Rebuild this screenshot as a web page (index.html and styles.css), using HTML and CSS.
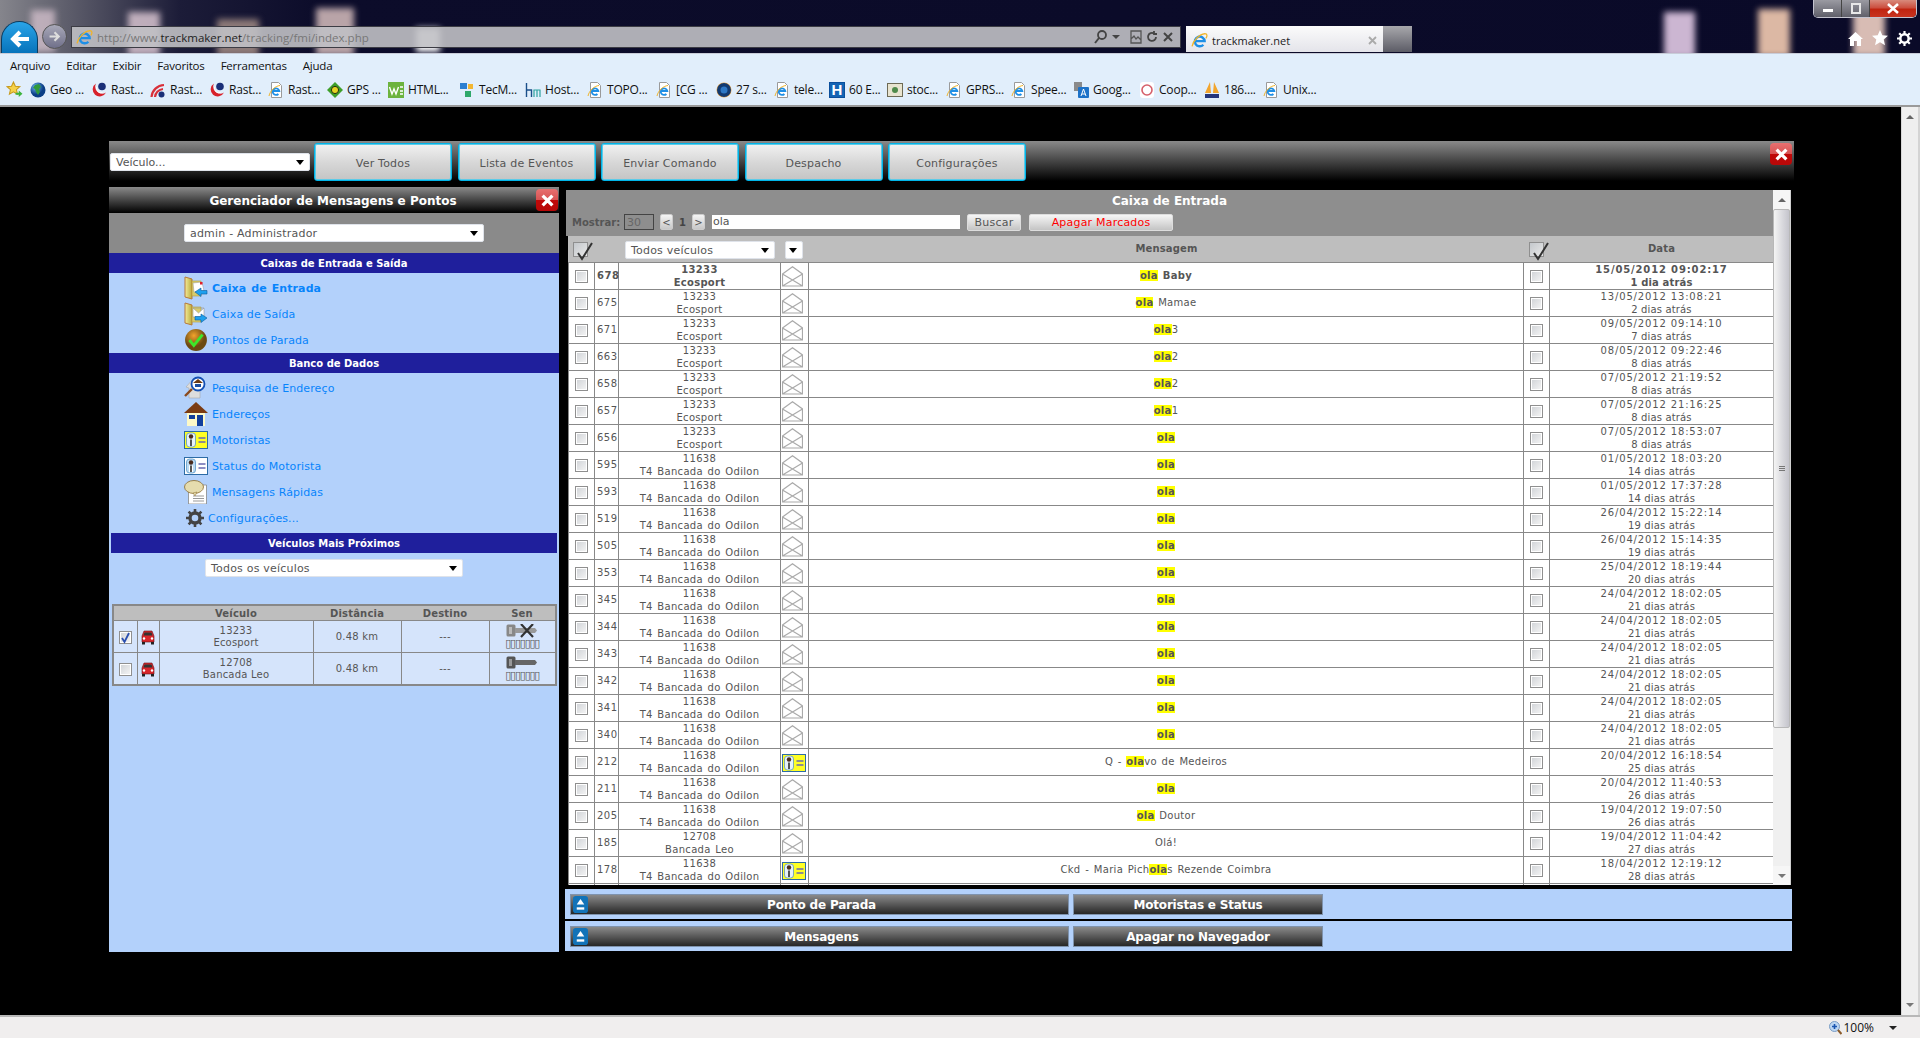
FILE: index.html
```html
<!DOCTYPE html>
<html lang="pt-BR">
<head>
  <meta charset="UTF-8">
  <title>trackmaker.net</title>
  <link rel="stylesheet" href="styles.css">
</head>
<body>
  <!-- icon set -->
  <svg class="defs" width="0" height="0">
    <defs>
      <radialGradient id="globe" cx="35%" cy="30%"><stop offset="0" stop-color="#6fb7f5"/><stop offset="1" stop-color="#0b3f86"/></radialGradient>
      <radialGradient id="ball" cx="40%" cy="30%"><stop offset="0" stop-color="#f3a32c"/><stop offset="1" stop-color="#6b4a12"/></radialGradient>
      <linearGradient id="door" x1="0" x2="1"><stop offset="0" stop-color="#f4ec9c"/><stop offset="1" stop-color="#b9ab3a"/></linearGradient>
    </defs>
    <symbol id="ie" viewBox="0 0 16 16">
      <path d="M4 8.6h8.8A4.6 4.6 0 1 0 11.6 12" fill="none" stroke="#1e8fe6" stroke-width="2.3"/>
      <path d="M1 13.5C2 8 8 2 13 1.500C15.500 1.500 15.500 4 14 6" fill="none" stroke="#f0b429" stroke-width="1.200"/>
    </symbol>
    <symbol id="iedoc" viewBox="0 0 16 16">
      <path d="M3.500 .5h7l3 3v12h-10z" fill="#fff" stroke="#9a9a9a"/>
      <path d="M4.500 9h6.800A3.300 3.300 0 1 0 10.400 12" fill="none" stroke="#1e8fe6" stroke-width="1.800"/>
      <path d="M1 14C2 9 7 4 12 3.500" fill="none" stroke="#f0b429"/>
    </symbol>
    <symbol id="star" viewBox="0 0 16 16">
      <path d="M7 1l1.800 4 4.200.4-3.200 2.800 1 4.200L7 10.200 3.200 12.400l1-4.200L1 5.400l4.200-.4z" fill="#f6d24a" stroke="#c79a1c"/>
      <path d="M9 11h3V9l3.500 3-3.500 3v-2H9z" fill="#3cb43c"/>
    </symbol>
    <symbol id="geo" viewBox="0 0 16 16">
      <circle cx="8" cy="8" r="7.500" fill="url(#globe)"/>
      <path d="M5 3l4-1 2 3-2 2 1 3-2 3-2-3-1-3-2-1z" fill="#2f9a3b"/>
    </symbol>
    <symbol id="rast" viewBox="0 0 16 16">
      <path d="M5 1.500A7 7 0 1 0 15 10.500 7 7 0 0 1 5 1.500z" fill="#d8222c"/>
      <path d="M5.500 5A4.500 4.500 0 0 0 11.500 10.500" fill="none" stroke="#fff"/>
      <circle cx="11" cy="4.500" r="3.800" fill="#1a2f78"/>
    </symbol>
    <symbol id="wave" viewBox="0 0 16 16">
      <path d="M1.500 15A13 13 0 0 1 14 3M5 15A9 9 0 0 1 13 7" fill="none" stroke="#d8303a" stroke-width="2.200"/>
      <circle cx="11.500" cy="12.500" r="3" fill="#1a2f78"/>
    </symbol>
    <symbol id="gps" viewBox="0 0 16 16">
      <path d="M8 0l8 8-8 8-8-8z" fill="#3f9f2a"/>
      <circle cx="8" cy="8" r="3.600" fill="#e6d422" stroke="#23320f"/>
    </symbol>
    <symbol id="html" viewBox="0 0 16 16">
      <rect width="16" height="16" fill="#6cb33e"/>
      <path d="M1.500 5l2.500 7 2-5 2 5 2.500-7M12 5h3M12 9h3M12 12h3" fill="none" stroke="#fff" stroke-width="1.400"/>
    </symbol>
    <symbol id="tecm" viewBox="0 0 16 16">
      <rect x="1" y="1" width="7" height="6" fill="#2d7fd0"/>
      <rect x="9" y="2" width="5" height="5" fill="#f2b632"/>
      <rect x="6" y="9" width="6" height="6" fill="#2fa86a"/>
    </symbol>
    <symbol id="host" viewBox="0 0 16 16">
      <path d="M1.500 1v14M1.500 8h5v7" fill="none" stroke="#1b4f8a" stroke-width="1.400"/>
      <path d="M9 15V8h6v7M12 8v7" fill="none" stroke="#2ea2a0" stroke-width="1.200"/>
    </symbol>
    <symbol id="moon" viewBox="0 0 16 16">
      <circle cx="8" cy="8" r="7.500" fill="#f2a33a"/>
      <circle cx="8" cy="8" r="7" fill="#133a70"/>
      <circle cx="8" cy="8" r="3.500" fill="#2f78c4"/>
    </symbol>
    <symbol id="stoc" viewBox="0 0 16 16">
      <rect x=".5" y="1.500" width="15" height="13" fill="#e8e4d0" stroke="#6d6a55"/>
      <circle cx="8" cy="8" r="3" fill="#4f8a4a"/>
    </symbol>
    <symbol id="goog" viewBox="0 0 16 16">
      <rect x="1" y="0" width="8" height="9" fill="#8a8a8a"/>
      <rect x="5" y="5" width="11" height="11" rx="1" fill="#1d72c8"/>
      <path d="M8 14l2.500-7 2.500 7M9 12h3" fill="none" stroke="#fff"/>
    </symbol>
    <symbol id="coop" viewBox="0 0 16 16">
      <rect x="1" width="14" height="16" rx="3" fill="#fff"/>
      <circle cx="8" cy="8" r="5" fill="none" stroke="#d6606a" stroke-width="1.600"/>
    </symbol>
    <symbol id="pma" viewBox="0 0 16 16">
      <path d="M1 11L6 0l1 11zM9 11l1-11 5 11z" fill="#f2a52d"/>
      <rect x="1" y="12" width="14" height="4" fill="#25357a"/>
    </symbol>
    <symbol id="env" viewBox="0 0 21 21">
      <path d="M.5 8L10.500 .8 20.500 8v12H.5zM.5 8l20 12M20.500 8L.5 20" fill="#fff" stroke="#aaa" stroke-width="1.200"/>
    </symbol>
    <symbol id="driver" viewBox="0 0 24 18">
      <rect x=".5" y=".5" width="23" height="17" fill="#fff" stroke="#2d6ca6"/>
      <rect x="2.500" y="2" width="9" height="14" rx="3" fill="#bcdcf4" stroke="#4b8cc0" stroke-width=".7"/>
      <circle cx="7" cy="5.500" r="2.200" fill="#4a2c1e"/>
      <path d="M5 8.500h4V15H5z" fill="#fff"/>
      <path d="M7 8.500v6.500" stroke="#111" stroke-width="1.400"/>
      <path d="M14.500 7h7M14.500 11h7" stroke="#6a6ab0" stroke-width="1.400"/>
    </symbol>
    <symbol id="driver-y" viewBox="0 0 24 18">
      <rect x=".5" y=".5" width="23" height="17" fill="#ffff24" stroke="#2d6ca6"/>
      <rect x="2.500" y="2" width="9" height="14" rx="3" fill="#e6f2fa" stroke="#4b8cc0" stroke-width=".7"/>
      <circle cx="7" cy="5.500" r="2.200" fill="#4a2c1e"/>
      <path d="M7 8.500v6.500" stroke="#111" stroke-width="1.400"/>
      <path d="M14.500 7h7M14.500 11h7" stroke="#6a6ab0" stroke-width="1.400"/>
    </symbol>
    <symbol id="inbox" viewBox="0 0 24 24">
      <path d="M1 1l7 2v20l-7-2z" fill="url(#door)" stroke="#b5793a"/>
      <path d="M8 5h9v15H8z" fill="#d8cc6c" stroke="#b5a03a" stroke-width=".6"/>
      <path d="M9 7l9-1 2 9-10 1z" fill="#fff" stroke="#999" stroke-width=".5"/>
      <rect x="16" y="6" width="2.500" height="2.500" fill="#e0202c"/>
      <path d="M11 16l6-4v2.500h6v3.500h-6v2.500z" fill="#1ea0ee" stroke="#0a5c9a" stroke-width=".6"/>
    </symbol>
    <symbol id="outbox" viewBox="0 0 24 24">
      <path d="M1 1l7 2v20l-7-2z" fill="url(#door)" stroke="#b5793a"/>
      <path d="M8 5h9v15H8z" fill="#d8cc6c" stroke="#b5a03a" stroke-width=".6"/>
      <path d="M9 6h11v9H9zM9 6l5.500 5L20 6" fill="#fff" stroke="#999" stroke-width=".6"/>
      <path d="M23 16l-6-4v2.500h-6v3.500h6v2.500z" fill="#1ea0ee" stroke="#0a5c9a" stroke-width=".6"/>
    </symbol>
    <symbol id="stop" viewBox="0 0 22 22">
      <circle cx="11" cy="11" r="10" fill="url(#ball)"/>
      <path d="M5 11l4 5 8-10" fill="none" stroke="#3ee62a" stroke-width="2.600"/>
    </symbol>
    <symbol id="search-home" viewBox="0 0 24 24">
      <path d="M2 11l8-9 6 5v15H5V12z" fill="#ddd" stroke="#aaa" stroke-width=".6"/>
      <circle cx="14" cy="8" r="6.500" fill="#fff" stroke="#1450b4" stroke-width="1.800"/>
      <path d="M9 7l5-4 5 4z" fill="#6b3a12"/>
      <rect x="11" y="8" width="6" height="3" fill="#1d4fa0"/>
      <path d="M8 13l-7 7" stroke="#8a4a1e" stroke-width="2.400"/>
    </symbol>
    <symbol id="house" viewBox="0 0 24 24">
      <path d="M0 11L12 0l12 11z" fill="#7a3b13"/>
      <rect x="3" y="11" width="18" height="13" fill="#fdf9c8"/>
      <rect x="5" y="13" width="6" height="4" fill="#123f9c"/>
      <rect x="13" y="13" width="6" height="11" fill="#123f9c"/>
    </symbol>
    <symbol id="bubble" viewBox="0 0 24 24">
      <path d="M4.500 5h18v19h-18z" fill="#fff" stroke="#888" stroke-width=".8"/>
      <path d="M9 16h11M9 18.500h11M9 21h11" stroke="#999"/>
      <ellipse cx="10" cy="7" rx="9.500" ry="6.500" fill="#e5dcae" stroke="#8a6a2a" stroke-width=".8"/>
      <path d="M9 13l2 3 2-4z" fill="#e5dcae" stroke="#8a6a2a" stroke-width=".5"/>
    </symbol>
    <symbol id="gear" viewBox="0 0 18 18">
      <circle cx="9" cy="9" r="5" fill="none" stroke="#444" stroke-width="3.400"/>
      <path d="M9 0v4M9 14v4M0 9h4M14 9h4M2.600 2.600l2.800 2.800M12.600 12.600l2.800 2.800M2.600 15.400l2.800-2.800M12.600 5.400l2.800-2.800" stroke="#444" stroke-width="2.600"/>
    </symbol>
    <symbol id="car-front" viewBox="0 0 16 16">
      <path d="M4 2h8l2 5v6H2V7z" fill="#d8262c" stroke="#6a1014" stroke-width=".6"/>
      <path d="M4.500 3.500h7l1 3h-9z" fill="#333"/>
      <circle cx="4" cy="9.500" r="1.200" fill="#fff"/>
      <circle cx="12" cy="9.500" r="1.200" fill="#fff"/>
      <rect x="2" y="13" width="3" height="2.500" fill="#222"/>
      <rect x="11" y="13" width="3" height="2.500" fill="#222"/>
    </symbol>
    <symbol id="key" viewBox="0 0 32 14">
      <rect x=".5" y=".5" width="9" height="12" rx="1.500" fill="#555"/>
      <rect x="3" y="3" width="3" height="7" fill="#999"/>
      <path d="M9 4h20l2 2.500-2 2.500H9z" fill="#666"/>
    </symbol>
    <symbol id="key-off" viewBox="0 0 32 14">
      <rect x=".5" y=".5" width="9" height="12" rx="1.500" fill="#888"/>
      <rect x="3" y="3" width="3" height="7" fill="#bbb"/>
      <path d="M9 4h20l2 2.500-2 2.500H9z" fill="#999"/>
      <path d="M15 0l12 13M27 0L15 13" stroke="#333" stroke-width="2.200"/>
    </symbol>
    <symbol id="cross" viewBox="0 0 12 12">
      <path d="M1.500 1.500l9 9M10.500 1.500l-9 9" stroke="#fff" stroke-width="3"/>
    </symbol>
    <symbol id="expand" viewBox="0 0 16 18">
      <rect width="16" height="18" rx="3" fill="#1273b8"/>
      <path d="M8 3l4 6H4z" fill="#fff"/>
      <rect x="4" y="12" width="8" height="2.500" fill="#fff"/>
    </symbol>
  </svg>

  <!-- navegador -->
  <header class="browser">
    <div class="chrome">
      <i class="tile tile-1"></i><i class="tile tile-2"></i><i class="tile tile-3"></i><i class="tile tile-4"></i>
      <i class="tile tile-5"></i><i class="tile tile-6"></i><i class="tile tile-7"></i><i class="tile tile-8"></i>
      <div class="back"><svg viewBox="0 0 24 24"><path d="M21 12H6M12 5l-7 7 7 7" fill="none" stroke="#fff" stroke-width="4"/></svg></div>
      <div class="forward"><svg viewBox="0 0 24 24"><path d="M5 12h13M12 6l6 6-6 6" fill="none" stroke="#ddd" stroke-width="3"/></svg></div>
      <div class="address">
        <svg class="ie-16"><use href="#ie"/></svg>
        <span class="url">http://www.<b>trackmaker.net</b>/tracking/fmi/index.php</span>
        <div class="addr-tools">
          <svg width="14" height="16" viewBox="0 0 14 16"><circle cx="8" cy="6" r="4" fill="none" stroke="#444" stroke-width="1.800"/><path d="M5 9l-4 5" stroke="#444" stroke-width="2"/></svg>
          <i class="caret"></i>
          <svg class="tool-gap" width="12" height="14" viewBox="0 0 12 14"><path d="M1 1h10v12H1zM1 9l3-3 2 3 2-2 3 3" fill="none" stroke="#555" stroke-width="1.300"/></svg>
          <svg width="12" height="14" viewBox="0 0 12 14"><path d="M10 7a4 4 0 1 1-2-3.500M8 1v3h3" fill="none" stroke="#444" stroke-width="1.800"/></svg>
          <svg width="12" height="14" viewBox="0 0 12 14"><path d="M2 3l8 8M10 3l-8 8" stroke="#444" stroke-width="2"/></svg>
        </div>
      </div>
      <div class="tab">
        <svg class="ie-16"><use href="#ie"/></svg>
        <span>trackmaker.net</span>
        <svg class="tab-close" width="9" height="9" viewBox="0 0 9 9"><path d="M1 1l7 7M8 1L1 8" stroke="#aaa" stroke-width="1.800"/></svg>
      </div>
      <div class="newtab"></div>
      <div class="chrome-tools">
        <svg width="15" height="15" viewBox="0 0 15 15"><path d="M0 8l7.500-7L15 8h-2v7H9v-5H6v5H2V8z" fill="#fff"/></svg>
        <svg width="16" height="16" viewBox="0 0 16 16"><path d="M8 0l2.300 5.300 5.700.5-4.300 3.800 1.300 5.700L8 12.300l-5 3 1.300-5.700L0 5.800l5.700-.5z" fill="#fff"/></svg>
        <svg width="15" height="15" viewBox="0 0 18 18"><circle cx="9" cy="9" r="5" fill="none" stroke="#fff" stroke-width="3"/><path d="M9 0v4M9 14v4M0 9h4M14 9h4M2.600 2.600l2.800 2.800M12.600 12.600l2.800 2.800M2.600 15.400l2.800-2.800M12.600 5.400l2.800-2.800" stroke="#fff" stroke-width="2.600"/></svg>
      </div>
      <div class="win-buttons">
        <div class="win-min"><i></i></div>
        <div class="win-max"><i></i></div>
        <div class="win-close"><svg width="14" height="11" viewBox="0 0 14 11"><path d="M2 1l10 9M12 1L2 10" stroke="#fff" stroke-width="2.600"/></svg></div>
      </div>
    </div>
    <div class="bars">
      <nav class="menu">
        <span>Arquivo</span><span>Editar</span><span>Exibir</span><span>Favoritos</span><span>Ferramentas</span><span>Ajuda</span>
      </nav>
      <div class="favorites">
        <svg class="fav-star"><use href="#star"/></svg>
        <div class="fav-list">
          <span><svg><use href="#geo"/></svg>Geo ...</span>
          <span><svg><use href="#rast"/></svg>Rast...</span>
          <span><svg><use href="#wave"/></svg>Rast...</span>
          <span><svg><use href="#rast"/></svg>Rast...</span>
          <span><svg><use href="#iedoc"/></svg>Rast...</span>
          <span><svg><use href="#gps"/></svg>GPS ...</span>
          <span><svg><use href="#html"/></svg>HTML...</span>
          <span><svg><use href="#tecm"/></svg>TecM...</span>
          <span><svg><use href="#host"/></svg>Host...</span>
          <span><svg><use href="#iedoc"/></svg>TOPO...</span>
          <span><svg><use href="#iedoc"/></svg>[CG ...</span>
          <span><svg><use href="#moon"/></svg>27 s...</span>
          <span><svg><use href="#iedoc"/></svg>tele...</span>
          <span><b class="fav-h">H</b>60 E...</span>
          <span><svg><use href="#stoc"/></svg>stoc...</span>
          <span><svg><use href="#iedoc"/></svg>GPRS...</span>
          <span><svg><use href="#iedoc"/></svg>Spee...</span>
          <span><svg><use href="#goog"/></svg>Goog...</span>
          <span><svg><use href="#coop"/></svg>Coop...</span>
          <span><svg><use href="#pma"/></svg>186....</span>
          <span><svg><use href="#iedoc"/></svg>Unix...</span>
        </div>
      </div>
    </div>
  </header>

  <div class="page">
    <main class="app">
      <!-- barra superior -->
      <div class="topbar">
        <div class="sel sel-vehicle">Veículo...</div>
        <button class="top-btn">Ver Todos</button>
        <button class="top-btn">Lista de Eventos</button>
        <button class="top-btn">Enviar Comando</button>
        <button class="top-btn">Despacho</button>
        <button class="top-btn">Configurações</button>
        <div class="close close-top"><svg><use href="#cross"/></svg></div>
      </div>

      <div class="panels">
        <!-- gerenciador -->
        <aside class="manager">
          <div class="manager-title">
            <span>Gerenciador de Mensagens e Pontos</span>
            <div class="close"><svg><use href="#cross"/></svg></div>
          </div>
          <div class="manager-user"><div class="sel sel-user">admin - Administrador</div></div>
          <h4 class="band">Caixas de Entrada e Saída</h4>
          <a class="nav-item active"><svg><use href="#inbox"/></svg>Caixa de Entrada</a>
          <a class="nav-item"><svg><use href="#outbox"/></svg>Caixa de Saída</a>
          <a class="nav-item"><svg><use href="#stop"/></svg>Pontos de Parada</a>
          <h4 class="band">Banco de Dados</h4>
          <a class="nav-item"><svg><use href="#search-home"/></svg>Pesquisa de Endereço</a>
          <a class="nav-item"><svg><use href="#house"/></svg>Endereços</a>
          <a class="nav-item"><svg><use href="#driver-y"/></svg>Motoristas</a>
          <a class="nav-item"><svg><use href="#driver"/></svg>Status do Motorista</a>
          <a class="nav-item"><svg><use href="#bubble"/></svg>Mensagens Rápidas</a>
          <a class="nav-item nav-config"><svg><use href="#gear"/></svg>Configurações...</a>
          <h4 class="band band-inset">Veículos Mais Próximos</h4>
          <div class="sel sel-near">Todos os veículos</div>
          <table class="near">
            <colgroup><col class="n1"><col class="n2"><col class="n3"><col class="n4"><col class="n5"><col class="n6"></colgroup>
            <tr><th colspan="2"></th><th>Veículo</th><th>Distância</th><th>Destino</th><th>Sen</th></tr>
            <tr>
              <td><i class="cb cb-on"><svg width="11" height="12" viewBox="0 0 11 12"><path d="M2 6l2.500 4L9 1" fill="none" stroke="#2a4fb0" stroke-width="1.800"/></svg></i></td>
              <td><svg class="car"><use href="#car-front"/></svg></td>
              <td>13233<br>Ecosport</td><td>0.48 km</td><td>---</td>
              <td><svg class="key"><use href="#key-off"/></svg><span class="tofu">▯▯▯▯▯▯▯</span></td>
            </tr>
            <tr>
              <td><i class="cb"></i></td>
              <td><svg class="car"><use href="#car-front"/></svg></td>
              <td>12708<br>Bancada Leo</td><td>0.48 km</td><td>---</td>
              <td><svg class="key"><use href="#key"/></svg><span class="tofu">▯▯▯▯▯▯▯</span></td>
            </tr>
          </table>
        </aside>

        <section class="right">
          <!-- caixa de entrada -->
          <div class="inbox">
            <div class="inbox-main">
              <div class="inbox-head">
                <div class="inbox-title">Caixa de Entrada</div>
                <div class="toolbar">
                  <b class="show-label">Mostrar:</b>
                  <span class="page-size">30</span>
                  <button class="pager">&lt;</button>
                  <b class="page-no">1</b>
                  <button class="pager">&gt;</button>
                  <span class="search-box">ola</span>
                  <button class="tool-btn btn-search">Buscar</button>
                  <button class="tool-btn btn-delete">Apagar Marcados</button>
                </div>
              </div>
              <table class="messages">
                <colgroup><col class="m1"><col class="m2"><col class="m3"><col class="m4"><col class="m5"><col class="m6"><col class="m7"></colgroup>
                <tr class="head">
                  <th colspan="2"><i class="cb-all"><svg width="22" height="20" viewBox="0 0 22 20"><path d="M5 12l4 6L19 2" fill="none" stroke="#333" stroke-width="2"/></svg></i></th>
                  <th><div class="sel sel-all">Todos veículos</div></th>
                  <th><div class="sel sel-mini"></div></th>
                  <th>Mensagem</th>
                  <th><i class="cb-all"><svg width="22" height="20" viewBox="0 0 22 20"><path d="M5 12l4 6L19 2" fill="none" stroke="#333" stroke-width="2"/></svg></i></th>
                  <th>Data</th>
                </tr>
                <tr class="unread"><td><i class="cb"></i></td><td>678</td><td>13233<br>Ecosport</td><td><svg class="env"><use href="#env"/></svg></td><td><mark>ola</mark> Baby</td><td><i class="cb"></i></td><td>15/05/2012 09:02:17<br>1 dia atrás</td></tr>
                <tr><td><i class="cb"></i></td><td>675</td><td>13233<br>Ecosport</td><td><svg class="env"><use href="#env"/></svg></td><td><mark>ola</mark> Mamae</td><td><i class="cb"></i></td><td>13/05/2012 13:08:21<br>2 dias atrás</td></tr>
                <tr><td><i class="cb"></i></td><td>671</td><td>13233<br>Ecosport</td><td><svg class="env"><use href="#env"/></svg></td><td><mark>ola</mark>3</td><td><i class="cb"></i></td><td>09/05/2012 09:14:10<br>7 dias atrás</td></tr>
                <tr><td><i class="cb"></i></td><td>663</td><td>13233<br>Ecosport</td><td><svg class="env"><use href="#env"/></svg></td><td><mark>ola</mark>2</td><td><i class="cb"></i></td><td>08/05/2012 09:22:46<br>8 dias atrás</td></tr>
                <tr><td><i class="cb"></i></td><td>658</td><td>13233<br>Ecosport</td><td><svg class="env"><use href="#env"/></svg></td><td><mark>ola</mark>2</td><td><i class="cb"></i></td><td>07/05/2012 21:19:52<br>8 dias atrás</td></tr>
                <tr><td><i class="cb"></i></td><td>657</td><td>13233<br>Ecosport</td><td><svg class="env"><use href="#env"/></svg></td><td><mark>ola</mark>1</td><td><i class="cb"></i></td><td>07/05/2012 21:16:25<br>8 dias atrás</td></tr>
                <tr><td><i class="cb"></i></td><td>656</td><td>13233<br>Ecosport</td><td><svg class="env"><use href="#env"/></svg></td><td><mark>ola</mark></td><td><i class="cb"></i></td><td>07/05/2012 18:53:07<br>8 dias atrás</td></tr>
                <tr><td><i class="cb"></i></td><td>595</td><td>11638<br>T4 Bancada do Odilon</td><td><svg class="env"><use href="#env"/></svg></td><td><mark>ola</mark></td><td><i class="cb"></i></td><td>01/05/2012 18:03:20<br>14 dias atrás</td></tr>
                <tr><td><i class="cb"></i></td><td>593</td><td>11638<br>T4 Bancada do Odilon</td><td><svg class="env"><use href="#env"/></svg></td><td><mark>ola</mark></td><td><i class="cb"></i></td><td>01/05/2012 17:37:28<br>14 dias atrás</td></tr>
                <tr><td><i class="cb"></i></td><td>519</td><td>11638<br>T4 Bancada do Odilon</td><td><svg class="env"><use href="#env"/></svg></td><td><mark>ola</mark></td><td><i class="cb"></i></td><td>26/04/2012 15:22:14<br>19 dias atrás</td></tr>
                <tr><td><i class="cb"></i></td><td>505</td><td>11638<br>T4 Bancada do Odilon</td><td><svg class="env"><use href="#env"/></svg></td><td><mark>ola</mark></td><td><i class="cb"></i></td><td>26/04/2012 15:14:35<br>19 dias atrás</td></tr>
                <tr><td><i class="cb"></i></td><td>353</td><td>11638<br>T4 Bancada do Odilon</td><td><svg class="env"><use href="#env"/></svg></td><td><mark>ola</mark></td><td><i class="cb"></i></td><td>25/04/2012 18:19:44<br>20 dias atrás</td></tr>
                <tr><td><i class="cb"></i></td><td>345</td><td>11638<br>T4 Bancada do Odilon</td><td><svg class="env"><use href="#env"/></svg></td><td><mark>ola</mark></td><td><i class="cb"></i></td><td>24/04/2012 18:02:05<br>21 dias atrás</td></tr>
                <tr><td><i class="cb"></i></td><td>344</td><td>11638<br>T4 Bancada do Odilon</td><td><svg class="env"><use href="#env"/></svg></td><td><mark>ola</mark></td><td><i class="cb"></i></td><td>24/04/2012 18:02:05<br>21 dias atrás</td></tr>
                <tr><td><i class="cb"></i></td><td>343</td><td>11638<br>T4 Bancada do Odilon</td><td><svg class="env"><use href="#env"/></svg></td><td><mark>ola</mark></td><td><i class="cb"></i></td><td>24/04/2012 18:02:05<br>21 dias atrás</td></tr>
                <tr><td><i class="cb"></i></td><td>342</td><td>11638<br>T4 Bancada do Odilon</td><td><svg class="env"><use href="#env"/></svg></td><td><mark>ola</mark></td><td><i class="cb"></i></td><td>24/04/2012 18:02:05<br>21 dias atrás</td></tr>
                <tr><td><i class="cb"></i></td><td>341</td><td>11638<br>T4 Bancada do Odilon</td><td><svg class="env"><use href="#env"/></svg></td><td><mark>ola</mark></td><td><i class="cb"></i></td><td>24/04/2012 18:02:05<br>21 dias atrás</td></tr>
                <tr><td><i class="cb"></i></td><td>340</td><td>11638<br>T4 Bancada do Odilon</td><td><svg class="env"><use href="#env"/></svg></td><td><mark>ola</mark></td><td><i class="cb"></i></td><td>24/04/2012 18:02:05<br>21 dias atrás</td></tr>
                <tr><td><i class="cb"></i></td><td>212</td><td>11638<br>T4 Bancada do Odilon</td><td><svg class="drv"><use href="#driver-y"/></svg></td><td>Q - <mark>ola</mark>vo de Medeiros</td><td><i class="cb"></i></td><td>20/04/2012 16:18:54<br>25 dias atrás</td></tr>
                <tr><td><i class="cb"></i></td><td>211</td><td>11638<br>T4 Bancada do Odilon</td><td><svg class="env"><use href="#env"/></svg></td><td><mark>ola</mark></td><td><i class="cb"></i></td><td>20/04/2012 11:40:53<br>26 dias atrás</td></tr>
                <tr><td><i class="cb"></i></td><td>205</td><td>11638<br>T4 Bancada do Odilon</td><td><svg class="env"><use href="#env"/></svg></td><td><mark>ola</mark> Doutor</td><td><i class="cb"></i></td><td>19/04/2012 19:07:50<br>26 dias atrás</td></tr>
                <tr><td><i class="cb"></i></td><td>185</td><td>12708<br>Bancada Leo</td><td><svg class="env"><use href="#env"/></svg></td><td>Olá!</td><td><i class="cb"></i></td><td>19/04/2012 11:04:42<br>27 dias atrás</td></tr>
                <tr><td><i class="cb"></i></td><td>178</td><td>11638<br>T4 Bancada do Odilon</td><td><svg class="drv"><use href="#driver-y"/></svg></td><td>Ckd - Maria Pich<mark>ola</mark>s Rezende Coimbra</td><td><i class="cb"></i></td><td>18/04/2012 12:19:12<br>28 dias atrás</td></tr>
                <tr><td></td><td></td><td></td><td></td><td></td><td></td><td></td></tr>
              </table>
            </div>
            <div class="scroll">
              <div class="scroll-btn"><i class="tri-up"></i></div>
              <div class="scroll-thumb"><i></i><i></i><i></i></div>
              <div class="scroll-btn scroll-end"><i class="tri-down"></i></div>
            </div>
          </div>

          <!-- barras inferiores -->
          <div class="dock">
            <button class="dock-btn dock-wide"><svg><use href="#expand"/></svg>Ponto de Parada</button>
            <button class="dock-btn">Motoristas e Status</button>
          </div>
          <div class="dock">
            <button class="dock-btn dock-wide"><svg><use href="#expand"/></svg>Mensagens</button>
            <button class="dock-btn">Apagar no Navegador</button>
          </div>
        </section>
      </div>
    </main>
    <div class="page-scroll">
      <i class="tri-up"></i>
      <i class="tri-down"></i>
    </div>
  </div>

  <footer class="status">
    <svg width="13" height="14" viewBox="0 0 13 14"><circle cx="5.500" cy="5.500" r="5" fill="#bcd6f2" stroke="#7a9cc4"/><path d="M3 5.500h5M5.500 3v5" stroke="#1a55b0" stroke-width="1.600"/><path d="M9 9l3.500 4" stroke="#8a5a2a" stroke-width="2"/></svg>
    <span>100%</span>
    <i class="caret"></i>
  </footer>
</body>
</html>
```

FILE: styles.css
```css
* {
  box-sizing: border-box;
}

body {
  margin: 0;
  height: 100vh;
  overflow: hidden;
  display: flex;
  flex-direction: column;
  font-family: "DejaVu Sans", Verdana, sans-serif;
  font-size: 10px;
  color: #555;
  background-color: #000;
}

.defs {
  position: absolute;
}

i {
  display: block;
}

/* navegador */
.chrome {
  position: relative;
  height: 54px;
  padding-bottom: 1px;
  display: flex;
  align-items: flex-end;
  border-bottom: 1px solid #c8ccd8;
  overflow: hidden;
  font-family: "Open Sans", "Noto Sans", sans-serif;
  background: linear-gradient(90deg, #85858c 0, #5c5c6a 70px, #1c1c38 180px, #0c0c2a 320px, #0a0a28 100%);
}

.tile {
  position: absolute;
  filter: blur(3px);
  background-color: #d8c4d0;
}

.tile-1 { left: 31px; top: 10px; width: 24px; height: 42px; opacity: .75; }
.tile-2 { left: 128px; top: 12px; width: 32px; height: 44px; opacity: .85; }
.tile-3 { left: 217px; top: 19px; width: 42px; height: 38px; background-color: #8d7a78; }
.tile-4 { left: 316px; top: 8px; width: 38px; height: 48px; background-color: #b9a4a8; }
.tile-5 { left: 416px; top: 28px; width: 24px; height: 24px; background-color: #fff; }
.tile-6 { left: 1664px; top: 12px; width: 31px; height: 46px; background-color: #ccb6d2; }
.tile-7 { left: 1758px; top: 9px; width: 32px; height: 48px; background-color: #dcb8a4; }
.tile-8 { left: 1853px; top: 9px; width: 32px; height: 48px; background-color: #d8bcb4; }

.back {
  position: relative;
  width: 37px;
  height: 34px;
  margin-left: 1px;
  margin-bottom: -3px;
  padding: 5px 6px 0;
  border-radius: 19px 19px 0 0;
  border: 1px solid #0a3c60;
  border-bottom: none;
  background: linear-gradient(#2aa4e8, #0470b8);
}

.back svg {
  display: block;
  width: 24px;
  height: 24px;
}

.forward {
  position: relative;
  width: 25px;
  height: 25px;
  margin: 0 4px 3px 4px;
  padding: 3px;
  border-radius: 50%;
  border: 1px solid #555;
  background: linear-gradient(#a8a8b8, #70708a);
}

.forward svg {
  display: block;
  width: 17px;
  height: 17px;
}

.address {
  position: relative;
  width: 1110px;
  height: 22px;
  margin-bottom: 4px;
  display: flex;
  align-items: center;
  padding: 0 6px 0 4px;
  border: 1px solid #3c3c44;
  background-color: rgba(192, 192, 196, .9);
  font-size: 11.5px;
  color: #777;
}

.ie-16 {
  width: 17px;
  height: 17px;
  flex: none;
}

.url {
  margin-left: 4px;
}

.url b {
  font-weight: 400;
  color: #222;
}

.addr-tools {
  margin-left: auto;
  display: flex;
  align-items: center;
  gap: 4px;
}

.tool-gap {
  margin-left: 6px;
}

.caret {
  width: 0;
  height: 0;
  border-left: 4px solid transparent;
  border-right: 4px solid transparent;
  border-top: 4px solid #444;
}

.tab {
  position: relative;
  width: 197px;
  height: 26px;
  margin-left: 5px;
  display: flex;
  align-items: center;
  gap: 4px;
  padding: 2px 6px 0 5px;
  background: linear-gradient(#fbfbfb, #e4e4ea);
  font-size: 11px;
  color: #222;
}

.tab-close {
  margin-left: auto;
}

.newtab {
  position: relative;
  width: 29px;
  height: 26px;
  background: linear-gradient(#a8a8ac, #5c5c66);
}

.chrome-tools {
  position: relative;
  margin-left: auto;
  margin-right: 8px;
  margin-bottom: 6px;
  display: flex;
  align-items: center;
  gap: 9px;
}

.win-buttons {
  position: absolute;
  top: 0;
  right: 3px;
  width: 104px;
  height: 18px;
  display: flex;
  border: 1px solid #c4c4d0;
  border-top: none;
  border-radius: 0 0 5px 5px;
  overflow: hidden;
}

.win-min,
.win-max {
  width: 28px;
  display: flex;
  align-items: center;
  justify-content: center;
  border-right: 1px solid #444;
  background: linear-gradient(#9a9aa2, #60606a);
}

.win-min i {
  width: 10px;
  height: 3px;
  margin-top: 4px;
  background-color: #fff;
}

.win-max i {
  width: 10px;
  height: 11px;
  border: 2px solid #e8e8e8;
}

.win-close {
  flex: 1;
  display: flex;
  align-items: center;
  justify-content: center;
  background: linear-gradient(#d88a7c 0, #cc5040 45%, #c02410 55%, #c83420 100%);
}

.bars {
  height: 53px;
  border-bottom: 2px solid #9a9a9a;
  background-color: #e1eefb;
  font-family: "Open Sans", "Noto Sans", sans-serif;
  font-size: 12px;
  letter-spacing: -0.2px;
  color: #111;
}

.menu {
  height: 23px;
  padding-left: 10px;
  display: flex;
  align-items: center;
  gap: 16px;
  font-size: 11.5px;
}

.favorites {
  height: 25px;
  display: flex;
  align-items: center;
  padding-left: 6px;
}

.fav-star {
  width: 17px;
  height: 17px;
  flex: none;
}

.fav-list {
  margin-left: 7px;
  display: grid;
  grid-template-columns: 61px 59px 59px 59px 59px 61px 71px 66px 62px 69px 60px 58px 55px 58px 59px 65px 62px 66px 65px 59px 60px;
}

.fav-list span {
  display: flex;
  align-items: center;
  gap: 4px;
  white-space: nowrap;
}

.fav-list svg {
  width: 16px;
  height: 16px;
  flex: none;
}

.fav-h {
  width: 16px;
  height: 16px;
  flex: none;
  text-align: center;
  line-height: 14px;
  border: 1px solid #0b4f9c;
  background-color: #1464b4;
  color: #fff;
  font-family: "Liberation Sans", sans-serif;
  font-size: 15px;
  letter-spacing: 0;
}

/* pagina */
.page {
  flex: 1;
  display: flex;
  min-height: 0;
  background-color: #000;
}

.page-scroll {
  width: 19px;
  margin-left: auto;
  display: flex;
  flex-direction: column;
  align-items: center;
  justify-content: space-between;
  padding: 8px 0;
  border-left: 1px solid #d8d8d8;
  border-right: 2px solid #d4d4d4;
  background-color: #efefef;
}

.tri-up,
.tri-down {
  width: 0;
  height: 0;
  border-left: 4px solid transparent;
  border-right: 4px solid transparent;
}

.tri-up {
  border-bottom: 4px solid #666;
}

.tri-down {
  border-top: 4px solid #777;
}

.status {
  height: 23px;
  display: flex;
  align-items: center;
  justify-content: flex-end;
  padding-right: 23px;
  border-top: 2px solid #b8b8b8;
  background-color: #f0eeee;
  font-family: "Open Sans", "Noto Sans", sans-serif;
  font-size: 12px;
  color: #111;
}

.status span {
  margin: 0 15px 0 1px;
}

.status .caret {
  border-top-color: #222;
}

/* aplicacao */
.app {
  width: 1685px;
  margin: 34px 0 0 109px;
}

.topbar {
  height: 40px;
  display: flex;
  align-items: stretch;
  gap: 5.5px;
  padding: 2px 2px 0 1px;
  background: linear-gradient(#8a8a8a, #000);
}

.sel {
  position: relative;
  height: 18px;
  padding-left: 5px;
  border: 1px solid #dfe3ea;
  border-radius: 2px;
  background-color: #fff;
  font-size: 11px;
  font-weight: 400;
  line-height: 17px;
  letter-spacing: .2px;
  color: #555;
  text-align: left;
}

.sel::after {
  content: "";
  position: absolute;
  top: 6px;
  right: 5px;
  border-left: 4px solid transparent;
  border-right: 4px solid transparent;
  border-top: 5px solid #000;
}

.sel-vehicle {
  width: 200px;
  align-self: center;
  margin-right: -1.5px;
  letter-spacing: 0;
}

.top-btn {
  width: 138px;
  height: 38px;
  padding: 2px 0 0;
  border: 1px solid #00b4e8;
  border-radius: 3px;
  box-shadow: inset 0 0 0 1px #5ccbe8;
  background: linear-gradient(#f2f2f2, #d8d8d8 50%, #c4c4c4);
  font-family: inherit;
  font-size: 11px;
  letter-spacing: .2px;
  color: #555;
}

.close {
  width: 22px;
  height: 22px;
  display: flex;
  align-items: center;
  justify-content: center;
  border-radius: 4px;
  background: linear-gradient(#e87070 0, #d85454 48%, #c00808 52%, #b80808 100%);
}

.close svg {
  width: 13px;
  height: 13px;
}

.close-top {
  margin-left: auto;
}

.panels {
  display: flex;
  margin-top: 6px;
  gap: 6px;
}

/* gerenciador */
.manager {
  width: 450px;
  height: 765px;
  flex: none;
  background-color: #b3d1fb;
}

.manager-title {
  position: relative;
  height: 26px;
  display: flex;
  align-items: center;
  justify-content: center;
  padding-top: 1px;
  background: linear-gradient(#8a8a8a, #000);
  font-size: 12px;
  font-weight: 700;
  color: #fff;
}

.manager-title span {
  margin-right: 2px;
}

.manager-title .close {
  position: absolute;
  top: 2px;
  right: 1px;
}

.manager-user {
  height: 40px;
  padding: 11px 0 0 75px;
  background-color: #8a8a8a;
}

.sel-user {
  width: 300px;
}

.band {
  height: 20px;
  margin: 0;
  background-color: #1f1f9c;
  color: #fff;
  font-size: 10px;
  font-weight: 700;
  line-height: 21px;
  text-align: center;
}

.band-inset {
  margin: 2px 2px 0;
}

.nav-item {
  height: 26px;
  padding-left: 75px;
  display: flex;
  align-items: center;
  font-size: 11px;
  letter-spacing: .1px;
  color: #0784fb;
}

.band + .nav-item {
  margin-top: 2px;
}

.nav-item svg {
  width: 24px;
  height: 24px;
  margin-right: 4px;
  flex: none;
}

.nav-item.active {
  font-weight: 700;
  word-spacing: 1px;
}

.nav-config svg {
  width: 18px;
  height: 18px;
  margin: 0 4px 0 2px;
}

.sel-near {
  width: 258px;
  margin: 6px 0 0 96px;
}

.near {
  width: 443px;
  height: 82px;
  margin: 27px 0 0 3px;
  table-layout: fixed;
  border-collapse: collapse;
  border: 2px solid #888;
  background-color: #d5e4fb;
  text-align: center;
  line-height: 12px;
}

.n1 { width: 24px; }
.n2 { width: 22px; }
.n3 { width: 154px; }
.n4 { width: 88px; }
.n5 { width: 88px; }
.n6 { width: 67px; }

.near th {
  height: 14px;
  padding: 2px 0 0;
  background-color: #bebebe;
  letter-spacing: .2px;
}

.near td {
  height: 32px;
  padding: 1px 0 0;
  border: 1px solid #888;
  letter-spacing: .2px;
}

.car {
  display: block;
  width: 16px;
  height: 16px;
  margin: 0 auto;
}

.key {
  display: block;
  width: 32px;
  height: 14px;
  margin: 0 auto;
}

.tofu {
  display: block;
  font-size: 11px;
  line-height: 12px;
  letter-spacing: -1.2px;
}

.cb {
  position: relative;
  display: block;
  width: 13px;
  height: 13px;
  margin: 0 auto;
  border: 1px solid #8f8f8f;
  box-shadow: inset 0 0 0 1px #fff;
  background: linear-gradient(135deg, #cfd2d6, #f6f6f6);
}

.cb-on svg {
  position: absolute;
  top: 0;
  left: 0;
}

/* caixa de entrada */
.right {
  flex: 1;
  padding-top: 3px;
}

.inbox {
  width: 1225px;
  height: 695px;
  margin-left: 1px;
  display: flex;
}

.inbox-main {
  flex: 1;
  min-width: 0;
  overflow: hidden;
}

.inbox-head {
  height: 46px;
  background-color: #8e8e8e;
}

.inbox-title {
  height: 23px;
  color: #fff;
  font-size: 12px;
  font-weight: 700;
  line-height: 22px;
  text-align: center;
}

.toolbar {
  display: flex;
  align-items: center;
  height: 18px;
  padding-left: 6px;
}

.show-label {
  width: 52px;
  color: #555;
  font-size: 10px;
}

.page-size {
  width: 30px;
  height: 16px;
  padding-left: 2px;
  border: 1px solid #444;
  font-size: 11px;
  line-height: 15px;
  color: #666;
}

.pager {
  width: 13px;
  height: 16px;
  margin-left: 6px;
  padding: 0;
  border: 1px solid #ccc;
  border-radius: 2px;
  background: linear-gradient(#f4f4f4, #c8c8c8);
  font-family: inherit;
  font-size: 10px;
  color: #555;
}

.page-no {
  width: 13px;
  margin-left: 6px;
  font-size: 10px;
  color: #444;
}

.page-no + .pager {
  margin-left: 0;
}

.search-box {
  width: 248px;
  height: 14px;
  margin-left: 7px;
  padding-left: 1px;
  background-color: #fff;
  font-size: 11px;
  line-height: 14px;
}

.tool-btn {
  height: 17px;
  padding: 0;
  border: 1px solid #ddd;
  border-radius: 2px;
  background: linear-gradient(#f6f6f6, #c4c4c4);
  font-family: inherit;
  font-size: 11px;
  letter-spacing: .2px;
  color: #555;
}

.btn-search {
  width: 54px;
  margin-left: 7px;
}

.btn-delete {
  width: 144px;
  margin-left: 8px;
  color: #f00;
}

.messages {
  width: 1205px;
  margin-left: 2px;
  table-layout: fixed;
  border-collapse: separate;
  border-spacing: 0;
  background-color: #fff;
  line-height: 12.5px;
  letter-spacing: .15px;
  text-align: center;
}

.m1 { width: 27px; }
.m2 { width: 24px; }
.m3 { width: 162px; }
.m4 { width: 28px; }
.m5 { width: 715px; }
.m6 { width: 26px; }
.m7 { width: 223px; }

.messages th {
  height: 27px;
  padding: 1px 0 0;
  border-bottom: 1px solid #888;
  background-color: #bebebe;
  color: #555;
}

.messages td {
  height: 27px;
  padding: 1px 0 0;
  border-bottom: 1px solid #888;
  border-right: 1px solid #888;
  white-space: nowrap;
}

.messages td:first-child {
  border-left: 1px solid #888;
}

.messages td:last-child {
  border-right: none;
}

.messages td:nth-child(2) {
  padding-left: 2px;
  letter-spacing: .5px;
  text-align: left;
}

.messages td:nth-child(3),
.messages td:nth-child(5) {
  letter-spacing: .3px;
  word-spacing: 1.2px;
}

.messages td:last-child::first-line {
  letter-spacing: .85px;
}

.unread td {
  font-weight: 700;
}

mark {
  background-color: #ffff00;
  color: #555;
  font-weight: 700;
}

.cb-all {
  position: relative;
  width: 15px;
  height: 15px;
  margin-left: 5px;
  border: 1px solid #8f8f8f;
  background: linear-gradient(135deg, #c4c8cc, #e8e8e8);
}

.cb-all svg {
  position: absolute;
  top: -2px;
  left: -1px;
}

.sel-all {
  width: 150px;
  margin-left: 6px;
}

.sel-mini {
  width: 18px;
  margin-left: 4px;
}

.env {
  display: block;
  width: 21px;
  height: 21px;
  margin-left: 1px;
}

.drv {
  display: block;
  width: 24px;
  height: 18px;
  margin-left: 1px;
}

.scroll {
  width: 18px;
  flex: none;
  display: flex;
  flex-direction: column;
  background-color: #f0f0f0;
  border-right: 1px solid #d0d0d0;
}

.scroll-btn {
  height: 19px;
  display: flex;
  align-items: center;
  justify-content: center;
  background-color: #f6f6f6;
}

.scroll-end {
  margin-top: auto;
}

.scroll-thumb {
  height: 519px;
  display: flex;
  flex-direction: column;
  align-items: center;
  justify-content: center;
  gap: 1px;
  border: 1px solid #b8b8b8;
  border-radius: 2px;
  background: linear-gradient(90deg, #f4f4f4, #c4c4cc);
}

.scroll-thumb i {
  width: 6px;
  height: 1px;
  background-color: #777;
}

/* barras inferiores */
.dock {
  width: 1227px;
  height: 30px;
  margin: 4px 0 0;
  display: flex;
  align-items: center;
  gap: 4px;
  padding-left: 5px;
  background-color: #b3d1fb;
}

.dock + .dock {
  margin-top: 2px;
}

.dock-btn {
  position: relative;
  width: 250px;
  height: 21px;
  padding: 1px 0 0;
  border: 1px solid #7f93ad;
  background: linear-gradient(#8a8a8a, #262626);
  font-family: inherit;
  font-size: 12px;
  font-weight: 700;
  letter-spacing: -.2px;
  color: #fff;
}

.dock-wide {
  width: 499px;
  padding-left: 4px;
}

.dock-btn svg {
  position: absolute;
  top: 1px;
  left: 2px;
  width: 15px;
  height: 17px;
}
```
